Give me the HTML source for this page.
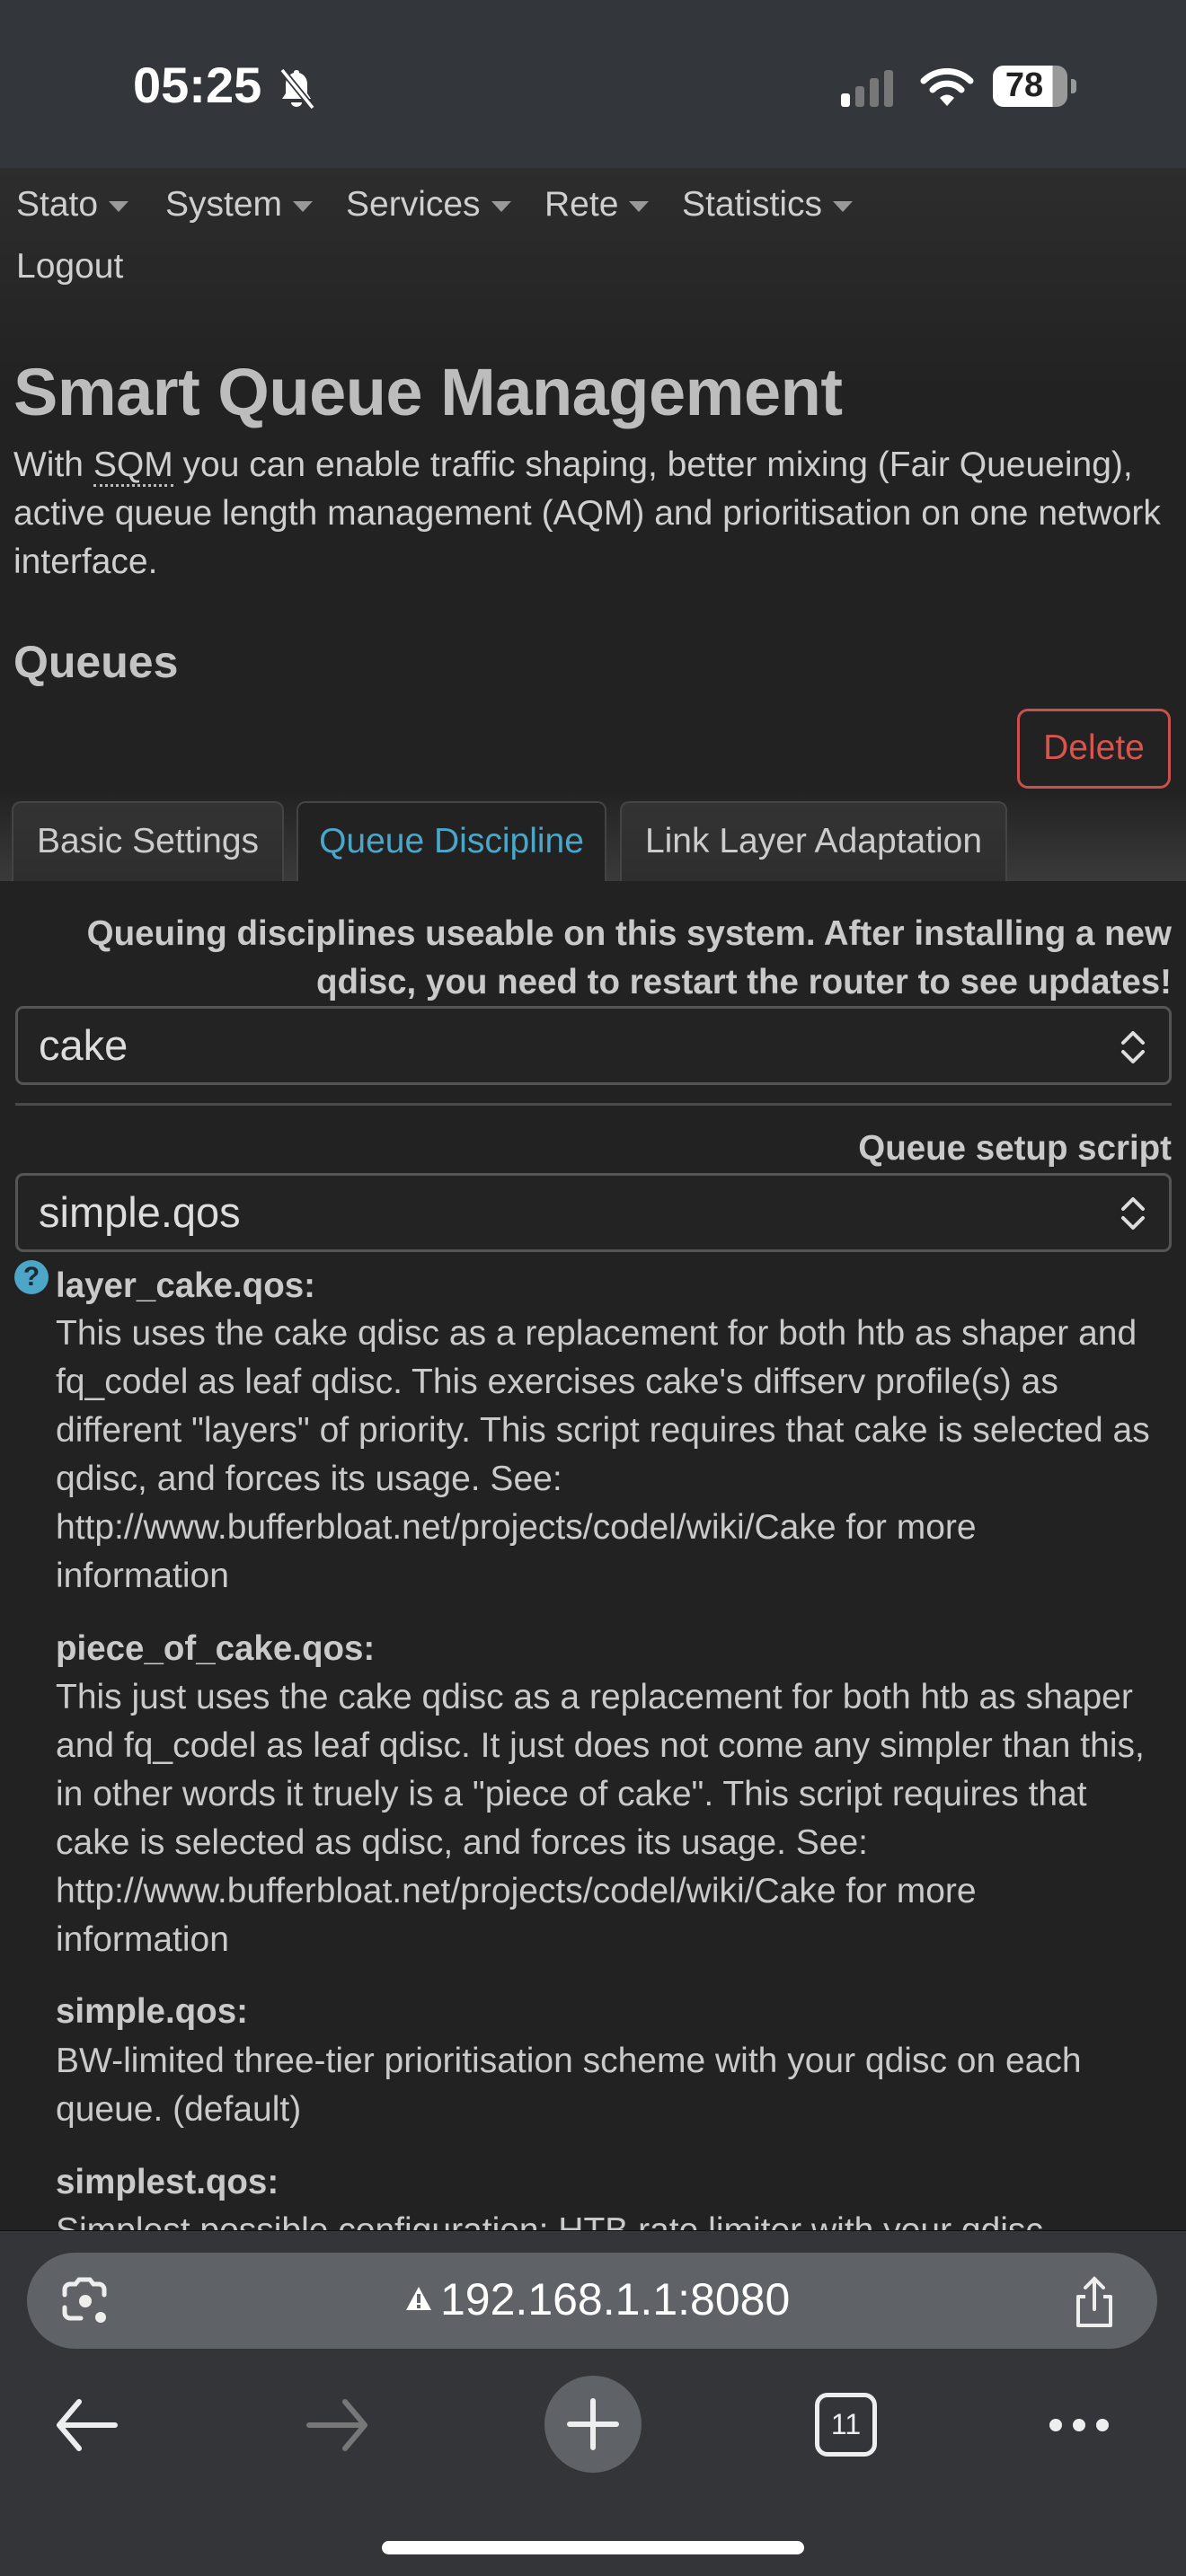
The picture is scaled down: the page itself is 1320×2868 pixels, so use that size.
<!DOCTYPE html>
<html><head><meta charset="utf-8"><style>
*{margin:0;padding:0;box-sizing:border-box}
body{width:1320px;height:2868px;overflow:hidden;background:#222;font-family:"Liberation Sans",sans-serif;position:relative;color:#ccc}
.a{position:absolute;white-space:nowrap}
.sb{position:absolute;left:0;top:0;width:1320px;height:187px;background:#33363a}
.top{position:absolute;left:0;top:187px;width:1320px;height:250px;background:linear-gradient(#2d2d2d,#222)}
.nav{font-size:39px;color:#cfcfcf}
.car{display:inline-block;width:0;height:0;border-left:11px solid transparent;border-right:11px solid transparent;border-top:12px solid #999;margin-left:12px;vertical-align:middle}
.p{font-size:39px;color:#cfcfcf}
.b{font-weight:bold}
.tab{position:absolute;top:892px;height:89px;border:2px solid #444;border-bottom:none;border-radius:10px 10px 0 0;background:linear-gradient(#333,#2e2e2e);font-size:39px;color:#ccc;text-align:center;line-height:86px}
.sel{position:absolute;left:17px;width:1287px;border:3px solid #555;border-radius:9px;background:#232323;font-size:47px;color:#ddd;padding-left:23px}
.d{font-size:39px;color:#cacaca;left:62px}
.h{font-size:38.5px;font-weight:bold;color:#cacaca;left:62px}
</style></head><body>
<div class="sb"></div>
<div class="a b" style="left:148px;top:62px;font-size:56px;color:#fff">05:25</div>
<svg class="a" style="left:306px;top:74px" width="48" height="48" viewBox="0 0 48 48"><path d="M24 4c-2 0-3 1-3 3-6 2-9 7-9 13v10l-4 6h32l-4-6V20c0-6-3-11-9-13 0-2-1-3-3-3z" fill="#fff"/><path d="M18 40a6 5 0 0 0 12 0z" fill="#fff"/><path d="M8 4l34 42" stroke="#33363a" stroke-width="7"/><path d="M8 4l34 42" stroke="#fff" stroke-width="3.5"/></svg>
<svg class="a" style="left:934px;top:76px" width="70" height="44"><rect x="2" y="28" width="10" height="15" rx="3" fill="#fff"/><rect x="18" y="20" width="10" height="23" rx="3" fill="#777"/><rect x="34" y="11" width="10" height="32" rx="3" fill="#777"/><rect x="50" y="2" width="10" height="41" rx="3" fill="#777"/></svg>
<svg class="a" style="left:1024px;top:74px" width="60" height="46" viewBox="0 0 60 46"><path d="M4 16a37 37 0 0 1 52 0" stroke="#fff" stroke-width="7" fill="none" stroke-linecap="round"/><path d="M14 26a22 22 0 0 1 32 0" stroke="#fff" stroke-width="7" fill="none" stroke-linecap="round"/><path d="M22 35l8 9 8-9a11 11 0 0 0-16 0z" fill="#fff"/></svg>
<div class="a" style="left:1105px;top:73px;width:83px;height:46px;border-radius:12px;background:linear-gradient(90deg,#fff 80%,#999 80%);overflow:hidden"></div>
<div class="a" style="left:1192px;top:88px;width:6px;height:16px;border-radius:0 4px 4px 0;background:#999"></div>
<div class="a b" style="left:1105px;top:74px;width:70px;text-align:center;font-size:38px;color:#222">78</div>

<div class="top"></div>
<div class="a nav" style="left:18px;top:206px">Stato<span class="car"></span></div>
<div class="a nav" style="left:184px;top:206px">System<span class="car"></span></div>
<div class="a nav" style="left:385px;top:206px">Services<span class="car"></span></div>
<div class="a nav" style="left:606px;top:206px">Rete<span class="car"></span></div>
<div class="a nav" style="left:759px;top:206px">Statistics<span class="car"></span></div>
<div class="a nav" style="left:18px;top:275px">Logout</div>

<div class="a b" style="left:15px;top:394px;font-size:74px;color:#bdbdbd;letter-spacing:-0.5px">Smart Queue Management</div>
<div class="a p" style="left:15px;top:496px">With <span style="border-bottom:3px dotted #bbb">SQM</span> you can enable traffic shaping, better mixing (Fair Queueing),</div>
<div class="a p" style="left:15px;top:550px">active queue length management (AQM) and prioritisation on one network</div>
<div class="a p" style="left:15px;top:604px">interface.</div>
<div class="a b" style="left:15px;top:708px;font-size:50px;color:#c4c4c4">Queues</div>

<div class="a" style="left:1132px;top:789px;width:171px;height:89px;border:3px solid #c9504c;border-radius:12px;color:#d9534f;font-size:39px;text-align:center;line-height:82px">Delete</div>

<div class="a" style="left:0;top:880px;width:1320px;height:101px;background:linear-gradient(#222,#3a3a3a)"></div>
<div class="tab" style="left:13px;width:303px">Basic Settings</div>
<div class="tab" style="left:330px;width:345px;background:#222;color:#4ba6c8">Queue Discipline</div>
<div class="tab" style="left:690px;width:431px">Link Layer Adaptation</div>

<div class="a b" style="right:16px;top:1018px;font-size:38.5px;color:#cacaca">Queuing disciplines useable on this system. After installing a new</div>
<div class="a b" style="right:16px;top:1072px;font-size:38.5px;color:#cacaca">qdisc, you need to restart the router to see updates!</div>
<div class="sel" style="top:1120px;height:88px;line-height:82px">cake</div>
<svg class="a" style="left:1246px;top:1146px" width="30" height="40"><path d="M4 15l11-11 11 11M4 25l11 11 11-11" stroke="#ddd" stroke-width="4" fill="none" stroke-linecap="round" stroke-linejoin="round"/></svg>
<div class="a" style="left:17px;top:1228px;width:1287px;height:3px;background:#4a4a4a"></div>
<div class="a b" style="right:16px;top:1257px;font-size:38.5px;color:#cacaca">Queue setup script</div>
<div class="sel" style="top:1306px;height:88px;line-height:82px">simple.qos</div>
<svg class="a" style="left:1246px;top:1331px" width="30" height="40"><path d="M4 15l11-11 11 11M4 25l11 11 11-11" stroke="#ddd" stroke-width="4" fill="none" stroke-linecap="round" stroke-linejoin="round"/></svg>

<div class="a" style="left:16px;top:1403px;width:38px;height:38px;border-radius:50%;background:#4ba6c8;color:#1c2a33;font-weight:bold;font-size:30px;text-align:center;line-height:38px">?</div>
<div class="a h" style="top:1410px">layer_cake.qos:</div>
<div class="a d" style="top:1463px">This uses the cake qdisc as a replacement for both htb as shaper and</div>
<div class="a d" style="top:1517px">fq_codel as leaf qdisc. This exercises cake's diffserv profile(s) as</div>
<div class="a d" style="top:1571px">different "layers" of priority. This script requires that cake is selected as</div>
<div class="a d" style="top:1625px">qdisc, and forces its usage. See:</div>
<div class="a d" style="top:1679px">http://www.bufferbloat.net/projects/codel/wiki/Cake for more</div>
<div class="a d" style="top:1733px">information</div>

<div class="a h" style="top:1814px">piece_of_cake.qos:</div>
<div class="a d" style="top:1868px">This just uses the cake qdisc as a replacement for both htb as shaper</div>
<div class="a d" style="top:1922px">and fq_codel as leaf qdisc. It just does not come any simpler than this,</div>
<div class="a d" style="top:1976px">in other words it truely is a "piece of cake". This script requires that</div>
<div class="a d" style="top:2030px">cake is selected as qdisc, and forces its usage. See:</div>
<div class="a d" style="top:2084px">http://www.bufferbloat.net/projects/codel/wiki/Cake for more</div>
<div class="a d" style="top:2138px">information</div>

<div class="a h" style="top:2218px">simple.qos:</div>
<div class="a d" style="top:2273px">BW-limited three-tier prioritisation scheme with your qdisc on each</div>
<div class="a d" style="top:2327px">queue. (default)</div>
<div class="a h" style="top:2408px">simplest.qos:</div>
<div class="a d" style="top:2462px">Simplest possible configuration: HTB rate limiter with your qdisc</div>

<div class="a" style="left:0;top:2483px;width:1320px;height:385px;background:#333538;border-top:1px solid #111"></div>
<div class="a" style="left:30px;top:2508px;width:1258px;height:107px;border-radius:54px;background:#5f6367"></div>
<svg class="a" style="left:66px;top:2535px" width="58" height="56" viewBox="0 0 58 56"><path d="M6 20V14a6 6 0 0 1 6-6h6l4-5h12l4 5h6a6 6 0 0 1 6 6v6M6 34v6a6 6 0 0 0 6 6h12" stroke="#eee" stroke-width="5" fill="none" stroke-linecap="round"/><circle cx="29" cy="27" r="7" fill="#eee"/><circle cx="46" cy="45" r="6" fill="#eee"/></svg>
<svg class="a" style="left:450px;top:2543px" width="32" height="32"><path d="M16 3L30 29H2z" fill="#fff"/><rect x="14" y="11" width="4" height="10" fill="#5f6367"/><rect x="14" y="23" width="4" height="4" fill="#5f6367"/></svg>
<div class="a" style="left:490px;top:2531px;font-size:50px;color:#fff">192.168.1.1:8080</div>
<svg class="a" style="left:1190px;top:2533px" width="56" height="60"><path d="M28 4v34M18 14l10-10 10 10" stroke="#eee" stroke-width="4" fill="none" stroke-linecap="round"/><path d="M18 24h-8v32h36V24h-8" stroke="#eee" stroke-width="4" fill="none" stroke-linejoin="round"/></svg>

<svg class="a" style="left:58px;top:2670px" width="74" height="60"><path d="M70 30H8M30 4L8 30l22 26" stroke="#eee" stroke-width="6" fill="none" stroke-linecap="round" stroke-linejoin="round"/></svg>
<svg class="a" style="left:340px;top:2670px" width="74" height="60"><path d="M4 30h62M44 4l22 26-22 26" stroke="#777" stroke-width="6" fill="none" stroke-linecap="round" stroke-linejoin="round"/></svg>
<div class="a" style="left:606px;top:2645px;width:108px;height:108px;border-radius:50%;background:#5f6367"></div>
<svg class="a" style="left:630px;top:2669px" width="60" height="60"><path d="M30 4v52M4 30h52" stroke="#eee" stroke-width="6" stroke-linecap="round"/></svg>
<div class="a" style="left:907px;top:2664px;width:69px;height:71px;border:5px solid #eee;border-radius:14px;color:#eee;font-size:32px;text-align:center;line-height:60px">11</div>
<svg class="a" style="left:1166px;top:2685px" width="70" height="30"><circle cx="9" cy="15" r="7" fill="#eee"/><circle cx="35" cy="15" r="7" fill="#eee"/><circle cx="61" cy="15" r="7" fill="#eee"/></svg>
<div class="a" style="left:425px;top:2829px;width:470px;height:15px;border-radius:8px;background:#fff"></div>
</body></html>
